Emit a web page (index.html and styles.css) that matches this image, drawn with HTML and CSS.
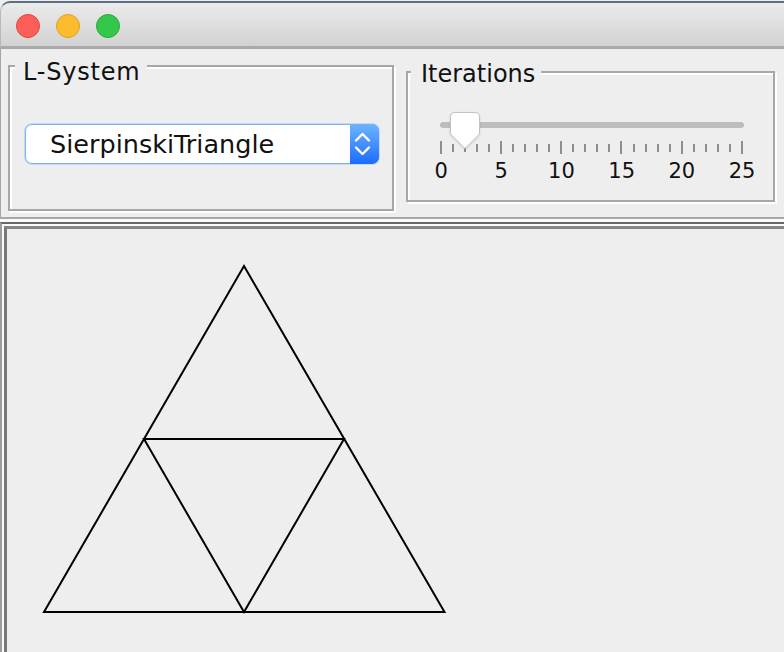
FILE: index.html
```html
<!DOCTYPE html>
<html>
<head>
<meta charset="utf-8">
<title>L-System</title>
<link rel="stylesheet" href="styles.css">
</head>
<body>
<div class="window">
  <div class="titlebar">
    <span class="light red"></span>
    <span class="light yellow"></span>
    <span class="light green"></span>
  </div>
  <div class="toppanel">
    <div class="group group-lsys">
      <span class="legend legend-lsys">L-System</span>
      <div class="combo">
        <span class="combo-text">SierpinskiTriangle</span>
        <span class="combo-btn">
          <svg width="29" height="40" viewBox="0 0 29 40">
            <polyline points="6,16.5 12.5,10 19,16.5" fill="none" stroke="#fff" stroke-width="2.4" stroke-linecap="round" stroke-linejoin="round"/>
            <polyline points="6,23.5 12.5,30 19,23.5" fill="none" stroke="#fff" stroke-width="2.4" stroke-linecap="round" stroke-linejoin="round"/>
          </svg>
        </span>
      </div>
    </div>
    <div class="group group-iter">
      <span class="legend legend-iter">Iterations</span>
      <div class="slider">
        <div class="track"></div>
        <div class="ticks">
          <span class="tick major"></span><span class="tick"></span><span class="tick"></span><span class="tick"></span><span class="tick"></span>
          <span class="tick major"></span><span class="tick"></span><span class="tick"></span><span class="tick"></span><span class="tick"></span>
          <span class="tick major"></span><span class="tick"></span><span class="tick"></span><span class="tick"></span><span class="tick"></span>
          <span class="tick major"></span><span class="tick"></span><span class="tick"></span><span class="tick"></span><span class="tick"></span>
          <span class="tick major"></span><span class="tick"></span><span class="tick"></span><span class="tick"></span><span class="tick"></span>
          <span class="tick major"></span>
        </div>
        <div class="labels">
          <span>0</span><span>5</span><span>10</span><span>15</span><span>20</span><span>25</span>
        </div>
        <svg class="thumb" width="32" height="39" viewBox="0 0 32 39">
          <path d="M1.5,6 Q1.5,1.5 6,1.5 H26 Q30.5,1.5 30.5,6 V23 L16,37.5 L1.5,23 Z" fill="#ffffff" stroke="#c2c2c2" stroke-width="1"/>
        </svg>
      </div>
    </div>
  </div>
  <div class="canvas-outer">
    <div class="canvas-frame">
      <div class="canvas">
        <svg class="drawing" width="777" height="423" viewBox="7 229 777 423">
          <g fill="none" stroke="#000" stroke-width="2">
            <polygon points="244,266 44,612 444.5,612"/>
            <polygon points="144,439 344,439 244,612"/>
          </g>
        </svg>
      </div>
    </div>
  </div>
</div>
</body>
</html>
```
FILE: styles.css
```css
html, body {
  margin: 0;
  padding: 0;
}

body {
  background: #f4f4f4;
  font-family: "DejaVu Sans", "Noto Sans", sans-serif;
  overflow: hidden;
}

.window {
  width: 784px;
  height: 652px;
  display: flex;
  flex-direction: column;
  background: #eeeeee;
}

.titlebar {
  margin-top: 1px;
  height: 32px;
  border-top: 2px solid #5f7083;
  border-left: 1px solid #b9b9b9;
  border-bottom: 3px solid #a9a9a9;
  border-top-left-radius: 10px;
  background: linear-gradient(#ebebeb, #d2d2d2);
  display: flex;
  align-items: flex-start;
  gap: 16px;
  padding: 11px 0 0 15px;
  box-sizing: content-box;
  flex: none;
}

.light {
  width: 22px;
  height: 22px;
  border-radius: 50%;
  border: 1px solid;
}

.red { background: #fc5f57; border-color: #e0443e; }
.yellow { background: #fdbc2e; border-color: #dea123; }
.green { background: #34c84a; border-color: #27aa35; }

.toppanel {
  height: 168px;
  border-left: 1px solid #a5a5a5;
  border-bottom: 2px solid #a9a9a9;
  display: flex;
  align-items: flex-start;
  flex: none;
}

.group {
  position: relative;
  box-sizing: border-box;
  border: 2px solid #a7a7a7;
  box-shadow: 2px 2px 0 #ffffff, inset 2px 2px 0 #ffffff;
}

.group-lsys {
  margin: 16px 0 0 7px;
  width: 386px;
  height: 146px;
}

.group-iter {
  margin: 22px 0 0 12px;
  width: 369px;
  height: 131px;
}

.legend {
  position: absolute;
  background: #eeeeee;
  font-size: 24px;
  line-height: 24px;
  color: #111111;
  padding: 0 6px 0 8px;
  white-space: nowrap;
}

.legend-lsys {
  top: -7px;
  left: 5px;
  letter-spacing: 0.8px;
}

.legend-iter {
  top: -11px;
  left: 3px;
  padding-left: 10px;
}

.combo {
  margin: 57px 0 0 15px;
  width: 354px;
  height: 40px;
  box-sizing: border-box;
  display: flex;
  align-items: center;
  background: #ffffff;
  border: 1px solid #86b1ec;
  border-radius: 7px;
  box-shadow: 0 0 0 1px #c3d9f7;
}

.combo-text {
  flex: 1;
  padding-left: 24px;
  font-size: 25.5px;
  line-height: 38px;
  color: #111111;
}

.combo-btn {
  width: 29px;
  height: 40px;
  margin: -1px -1px -1px 0;
  border-radius: 0 7px 7px 0;
  background: linear-gradient(#6fb4ff, #1b6cff);
  display: flex;
}

.slider {
  position: relative;
  margin: 38px 0 0 32px;
  padding-top: 11px;
  width: 304px;
}

.track {
  height: 6px;
  border-radius: 3px;
  background: #bdbdbd;
}

.ticks {
  width: 303px;
  height: 13px;
  margin-top: 13px;
  display: flex;
  justify-content: space-between;
  align-items: center;
}

.tick {
  width: 2px;
  height: 8px;
  background: #8e8e8e;
}

.tick.major {
  height: 13px;
}

.labels {
  display: grid;
  grid-template-columns: repeat(6, 60.2px);
  margin: 7px 0 0 -29px;
  font-size: 21px;
  line-height: 21px;
  text-align: center;
  color: #111111;
}

.thumb {
  position: absolute;
  left: 8.5px;
  top: 0;
  filter: drop-shadow(0 1px 1px rgba(0, 0, 0, 0.12));
}

.canvas-outer {
  flex: 1;
  display: flex;
  flex-direction: column;
  border-top: 3px solid #fafafa;
  min-height: 0;
}

.canvas-frame {
  flex: 1;
  display: flex;
  flex-direction: column;
  border-top: 2px solid #686868;
  border-left: 2px solid #9d9d9d;
  padding: 2px 0 0 2px;
  background: #fafafa;
  min-height: 0;
}

.canvas {
  flex: 1;
  border-top: 3px solid #858585;
  border-left: 3px solid #787878;
  background: #eeeeee;
  overflow: hidden;
  min-height: 0;
}

.drawing {
  display: block;
}
```
